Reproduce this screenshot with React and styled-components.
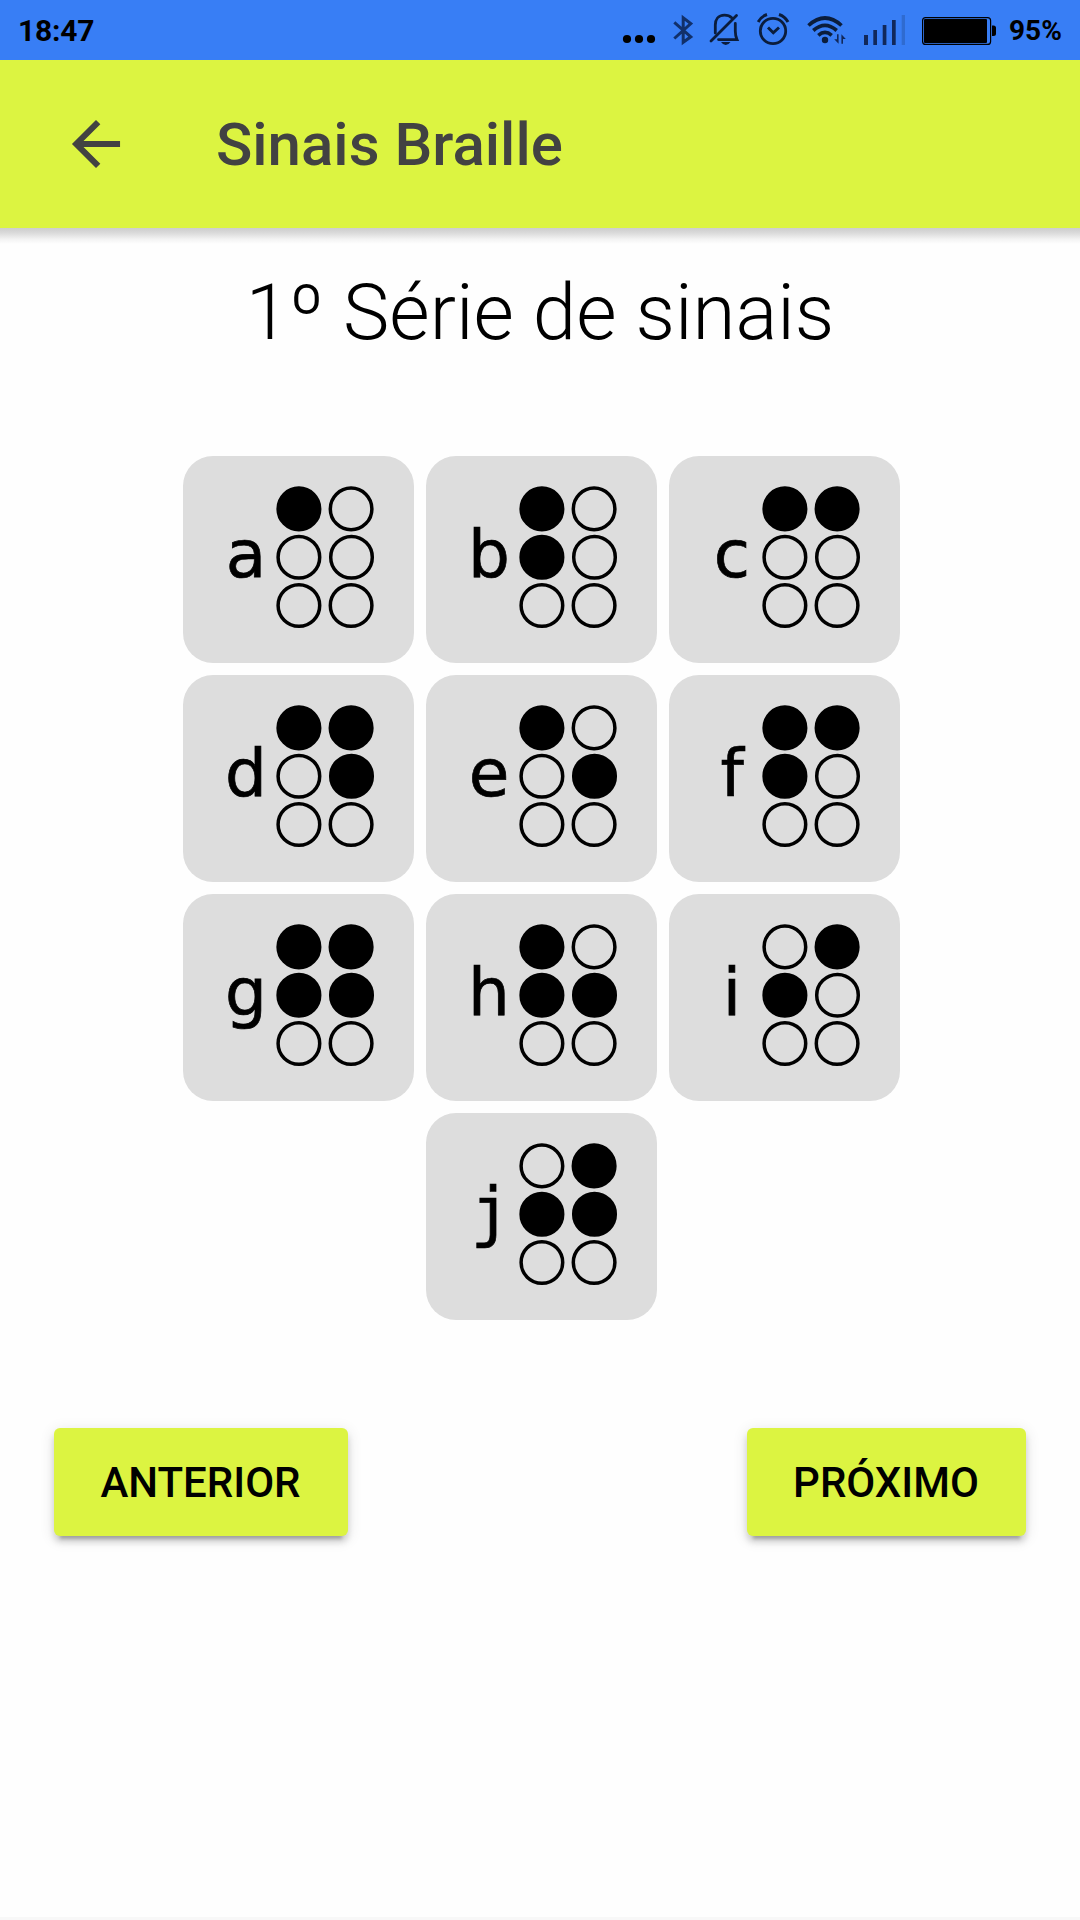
import React from "react";
import styled, { createGlobalStyle } from "styled-components";

const Global = createGlobalStyle`
  * { box-sizing: border-box; }
  html, body { margin: 0; padding: 0; background: #fefefe; }
`;

const Screen = styled.div`
  width: 1080px;
  height: 1920px;
  display: flex;
  flex-direction: column;
  overflow: hidden;
  border-bottom: 3px solid #f8f8f8;
  background: #fefefe;
  color: #000;
  font-family: Roboto, sans-serif;
`;

const StatusBar = styled.div`
  height: 60px;
  flex: none;
  display: flex;
  align-items: center;
  justify-content: space-between;
  padding: 0 18px;
  background: #387ef5;
`;

const Clock = styled.span`
  padding-top: 1px;
  font-size: 30px;
  font-weight: 700;
  line-height: 60px;
  letter-spacing: -0.2px;
`;

const StatusRight = styled.div`
  display: flex;
  align-items: center;
`;

const StatusIcons = styled.svg`
  display: block;
  width: 376px;
  height: 60px;
`;

const Percent = styled.span`
  width: 53px;
  margin-left: 13px;
  padding-top: 1px;
  font-size: 28px;
  font-weight: 700;
  line-height: 60px;
  white-space: nowrap;
`;

const Toolbar = styled.header`
  height: 168px;
  flex: none;
  display: flex;
  align-items: center;
  padding-left: 60px;
  gap: 84px;
  background: #dcf441;
  color: #424242;
`;

const BackButton = styled.button`
  width: 72px;
  height: 72px;
  padding: 0;
  border: 0;
  background: none;
  color: inherit;

  svg {
    display: block;
    width: 72px;
    height: 72px;
    fill: currentColor;
  }
`;

const ToolbarTitle = styled.h1`
  margin: 2px 0 0;
  font-size: 60px;
  font-weight: 500;
  line-height: 72px;
`;

const Content = styled.main`
  flex: 1;
  display: flex;
  flex-direction: column;
`;

const ToolbarShadow = styled.div`
  height: 16px;
  flex: none;
  background: linear-gradient(#cdcdcd 0%, #dadada 30%, #f3f3f3 70%, #fefefe 100%);
`;

const Heading = styled.h2`
  margin: 23px 0 97px;
  text-align: center;
  font-size: 78px;
  font-weight: 300;
  line-height: 92px;
`;

const Cards = styled.div`
  width: 717px;
  margin-left: 183px;
  display: flex;
  flex-wrap: wrap;
  justify-content: center;
  gap: 12px;
`;

const Card = styled.div`
  width: 231px;
  height: 207px;
  display: flex;
  align-items: flex-start;
  padding: 30px 0 0 33px;
  border-radius: 30px;
  background: #ddd;
`;

const Letter = styled.span`
  width: 60px;
  margin-top: 29px;
  padding-left: ${(p) => (p.$mono ? 3 : 0)}px;
  text-align: center;
  font-family: ${(p) => (p.$mono ? '"DejaVu Sans Mono", monospace' : '"DejaVu Sans", sans-serif')};
  font-size: 66px;
  line-height: 80px;
  -webkit-text-stroke: 0.7px #000;
`;

const Dots = styled.svg`
  display: block;
  width: 99px;
  height: 143px;
  stroke: #000;
  stroke-width: 3.5;
`;

const Actions = styled.nav`
  margin-top: 108px;
  padding: 0 54px;
  display: flex;
  justify-content: space-between;
`;

const ActionButton = styled.button`
  width: ${(p) => p.$width}px;
  height: 108px;
  padding: 1px 1px 0 0;
  border: 0;
  border-radius: 6px;
  background: #dcf441;
  color: #000;
  font-family: inherit;
  font-size: 42px;
  font-weight: 500;
  line-height: 108px;
  text-transform: uppercase;
  box-shadow:
    0 6px 6px 0 rgba(0, 0, 0, 0.14),
    0 9px 3px -6px rgba(0, 0, 0, 0.2),
    0 3px 15px 0 rgba(0, 0, 0, 0.12);
`;

// Each pattern lists the six dots row by row, left to right.
const SIGNS = [
  ["a", "100000"],
  ["b", "101000"],
  ["c", "110000"],
  ["d", "110100"],
  ["e", "100100"],
  ["f", "111000"],
  ["g", "111100"],
  ["h", "101100"],
  ["i", "011000"],
  ["j", "011100"],
];

function Sign({ letter, pattern }) {
  return (
    <Card>
      <Letter $mono={letter === "j"}>{letter}</Letter>
      <Dots viewBox="0 0 99 143">
        {[...pattern].map((on, i) => (
          <circle
            key={i}
            cx={i % 2 ? (i === 3 ? 75.5 : 75.1) : 22.9}
            cy={22.9 + Math.floor(i / 2) * 48.3}
            r="20.8"
            fill={on === "1" ? "#000" : "none"}
          />
        ))}
      </Dots>
    </Card>
  );
}

function StatusGlyphs() {
  return (
    <StatusIcons viewBox="620 0 376 60">
      <g fill="#000">
        <circle cx="627" cy="39" r="4.1" />
        <circle cx="639" cy="39" r="4.1" />
        <circle cx="651" cy="39" r="4.1" />
      </g>
      <path
        d="M674.3 22.3 L690.800 36.800 L683.200 42.300 V17.800 L690.800 23.500 L674.300 38.500"
        fill="none" stroke="#11306a" strokeWidth="3"
      />
      <g fill="none" stroke="#0b1d3c" strokeWidth="2.8" strokeLinecap="round">
        <path d="M711 41 L736.500 15.500" />
        <path d="M732 18 Q729 15.200 724.500 15.200 C718 15.200 715.300 20 715.300 25 V33" />
        <path d="M735.300 23.500 V31 Q735.300 36 737 39.600 H718.500" />
      </g>
      <path d="M721 42 H730.500 Q728.500 45 725.700 45 Q723 45 721 42 Z" fill="#0b1d3c" />
      <g fill="none" stroke="#0b1d3c">
        <circle cx="773" cy="31" r="12.700" strokeWidth="2.800" />
        <path d="M768 27.500 L773.300 32.800 L779 27.500" strokeWidth="2.900" />
        <path d="M758.200 22 Q761 16.500 767 14.500 M779 14.500 Q785 16.500 788 22" strokeWidth="3" />
      </g>
      <g fill="none" stroke="#0b1d3c" strokeWidth="3.700">
        <path d="M808.500 25.500 Q825 10.500 841.500 25.500" />
        <path d="M813.300 30.500 Q825 20.200 836.700 30.500" />
        <path d="M818.300 35.300 Q825 29.600 831.700 35.300" />
      </g>
      <circle cx="825" cy="40" r="3.200" fill="#0b1d3c" />
      <path d="M837 34.300 H838.600 V43.700 L834.200 39.200 H837 Z M843 43.700 H841.400 V34.300 L845.800 38.900 H843 Z" fill="#11285a" />
      <g fill="#11285a">
        <rect x="864" y="35" width="4" height="10" />
        <rect x="873.300" y="30" width="3.700" height="15" />
        <rect x="882.700" y="25" width="3.700" height="20" />
        <rect x="892" y="20" width="3.700" height="25" />
      </g>
      <rect x="901.700" y="15" width="3.300" height="30" fill="#2f6bd0" />
      <rect x="922.600" y="17.600" width="68" height="26.800" rx="3" fill="none" stroke="#000" strokeWidth="1.200" />
      <rect x="924" y="19" width="63" height="24" rx="1" fill="#000" />
      <path d="M992 25.500 H993.500 Q996 25.500 996 28 V33.500 Q996 36 993.500 36 H992 Z" fill="#000" />
    </StatusIcons>
  );
}

export default function App() {
  return (
    <Screen>
      <Global />
      <StatusBar>
        <Clock>18:47</Clock>
        <StatusRight>
          <StatusGlyphs />
          <Percent>95%</Percent>
        </StatusRight>
      </StatusBar>
      <Toolbar>
        <BackButton aria-label="Voltar">
          <svg viewBox="0 0 512 512">
            <path d="M427 234.625H167.296l119.500-119.510L256 85 85 256l171 171 30.796-30.115-119.500-119.510H427z" />
          </svg>
        </BackButton>
        <ToolbarTitle>Sinais Braille</ToolbarTitle>
      </Toolbar>
      <Content>
        <ToolbarShadow />
        <Heading>1º Série de sinais</Heading>
        <Cards>
          {SIGNS.map(([letter, pattern]) => (
            <Sign key={letter} letter={letter} pattern={pattern} />
          ))}
        </Cards>
        <Actions>
          <ActionButton $width={294}>Anterior</ActionButton>
          <ActionButton $width={279}>Próximo</ActionButton>
        </Actions>
      </Content>
    </Screen>
  );
}
